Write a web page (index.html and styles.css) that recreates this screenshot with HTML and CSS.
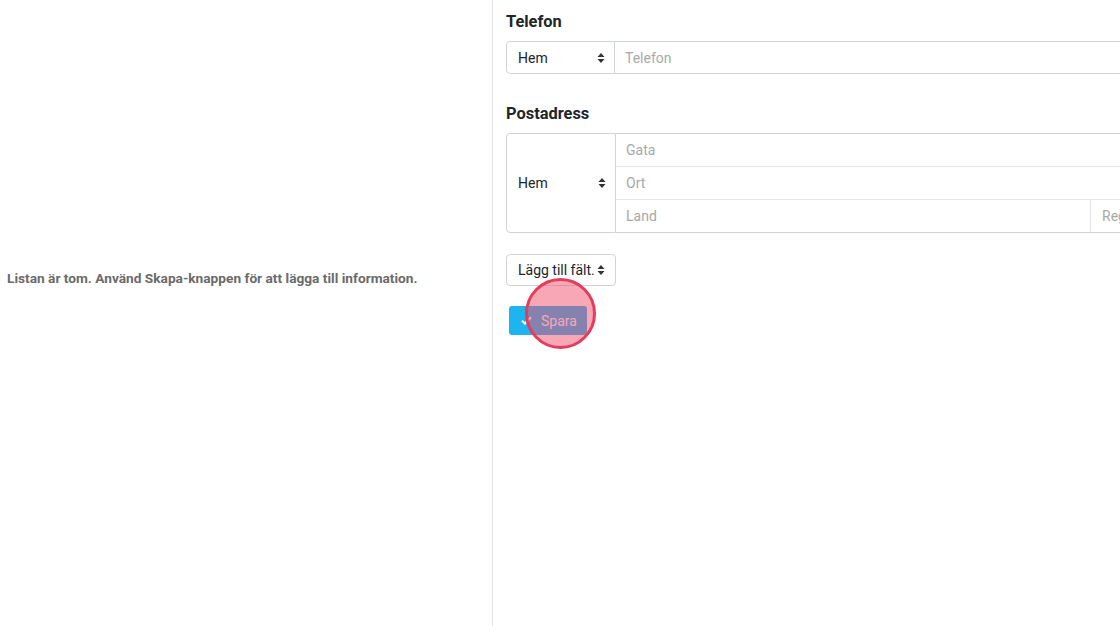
FILE: index.html
```html
<!DOCTYPE html>
<html lang="sv">
<head>
<meta charset="utf-8">
<link rel="stylesheet" href="styles.css">
</head>
<body>
<div class="app">
  <div class="list-pane">
    <p class="empty">Listan är tom. Använd Skapa-knappen för att lägga till information.</p>
  </div>
  <div class="form-pane">
    <h3 class="label">Telefon</h3>
    <div class="group">
      <div class="select sel-phone"><span>Hem</span><svg class="caret" viewBox="0 0 8 12" width="8" height="12"><path d="M4 1 L7.5 5 H0.5 Z M4 11 L7.5 7 H0.5 Z" fill="#333"/></svg></div>
      <div class="input grow"><span class="ph">Telefon</span></div>
    </div>

    <h3 class="label label-2">Postadress</h3>
    <div class="group addr">
      <div class="select sel-addr"><span>Hem</span><svg class="caret" viewBox="0 0 8 12" width="8" height="12"><path d="M4 1 L7.5 5 H0.5 Z M4 11 L7.5 7 H0.5 Z" fill="#333"/></svg></div>
      <div class="rows">
        <div class="row"><span class="ph">Gata</span></div>
        <div class="row"><span class="ph">Ort</span></div>
        <div class="row split">
          <div class="cell land"><span class="ph">Land</span></div>
          <div class="cell region"><span class="ph">Region</span></div>
        </div>
      </div>
    </div>

    <div class="add-field"><span>Lägg till fält.</span><svg class="caret" viewBox="0 0 8 12" width="8" height="12"><path d="M4 1 L7.5 5 H0.5 Z M4 11 L7.5 7 H0.5 Z" fill="#333"/></svg></div>

    <div class="save-wrap">
      <button class="save"><svg viewBox="0 0 12 10" width="11" height="9"><path d="M1 5.2 L4.3 8.4 L11 1.4" fill="none" stroke="#fff" stroke-width="2.4"/></svg><span>Spara</span></button>
      <div class="click-mark"></div>
    </div>
  </div>
</div>
</body>
</html>
```

FILE: styles.css
```css
* { box-sizing: border-box; }
html, body {
  margin: 0;
  padding: 0;
  background: #fff;
  overflow: hidden;
  width: 1120px;
  height: 626px;
}
body {
  font-family: Roboto, "Liberation Sans", Arial, sans-serif;
  color: #212529;
}
.app {
  display: flex;
  height: 626px;
}
.list-pane {
  width: 493px;
  flex: none;
  border-right: 1px solid #e3e3e3;
  padding: 269px 0 0 7px;
}
.empty {
  margin: 0;
  font-size: 13.7px;
  font-weight: 700;
  color: #6b6b6b;
  line-height: 18px;
}
.form-pane {
  flex: none;
  width: 720px;
  padding: 11px 0 0 13px;
}
.label {
  margin: 0 0 8px;
  font-size: 16.4px;
  font-weight: 700;
  line-height: 22px;
  color: #212529;
}
.label-2 { margin-top: 29px; }
.group {
  display: flex;
  height: 33px;
  font-size: 14px;
}
.select {
  display: flex;
  align-items: center;
  justify-content: space-between;
  padding: 0 9px 0 11px;
  border: 1px solid #ced4da;
  border-radius: 4px 0 0 4px;
  background: #fff;
  color: #212529;
}
.sel-phone { width: 109px; }
.input {
  display: flex;
  align-items: center;
  border: 1px solid #ced4da;
  border-left: none;
  padding-left: 10px;
}
.grow { flex: 1; }
.ph { color: #a9a9a9; }
.addr { height: 100px; }
.sel-addr { width: 110px; }
.rows {
  flex: 1;
  display: flex;
  flex-direction: column;
  border: 1px solid #ced4da;
  border-left: none;
}
.row {
  flex: 1;
  display: flex;
  align-items: center;
  padding-left: 10px;
  border-bottom: 1px solid #e6e6e6;
}
.row.split {
  border-bottom: none;
  padding-left: 0;
}
.cell {
  display: flex;
  align-items: center;
  height: 100%;
  padding-left: 10px;
}
.land {
  width: 475px;
  border-right: 1px solid #e6e6e6;
}
.region { flex: 1; padding-left: 11px; white-space: nowrap; }
.add-field {
  display: flex;
  align-items: center;
  justify-content: space-between;
  width: 110px;
  height: 32px;
  margin-top: 21px;
  padding: 0 10px 0 11px;
  border: 1px solid #ced4da;
  border-radius: 4px;
  font-size: 14px;
  color: #212529;
}
.save-wrap {
  position: relative;
  margin-top: 20px;
  margin-left: 3px;
  width: 78px;
}
.save {
  display: flex;
  align-items: center;
  gap: 9px;
  width: 78px;
  height: 29px;
  padding: 0 0 0 12px;
  border: none;
  border-radius: 3px;
  background: #1db4f0;
  color: #fff;
  font-family: Roboto, "Liberation Sans", Arial, sans-serif;
  font-size: 14px;
}
.click-mark {
  position: absolute;
  left: 16px;
  top: -28px;
  width: 71px;
  height: 71px;
  border-radius: 50%;
  border: 3px solid #e43d5c;
  background: rgba(240, 80, 110, 0.5);
}
```
